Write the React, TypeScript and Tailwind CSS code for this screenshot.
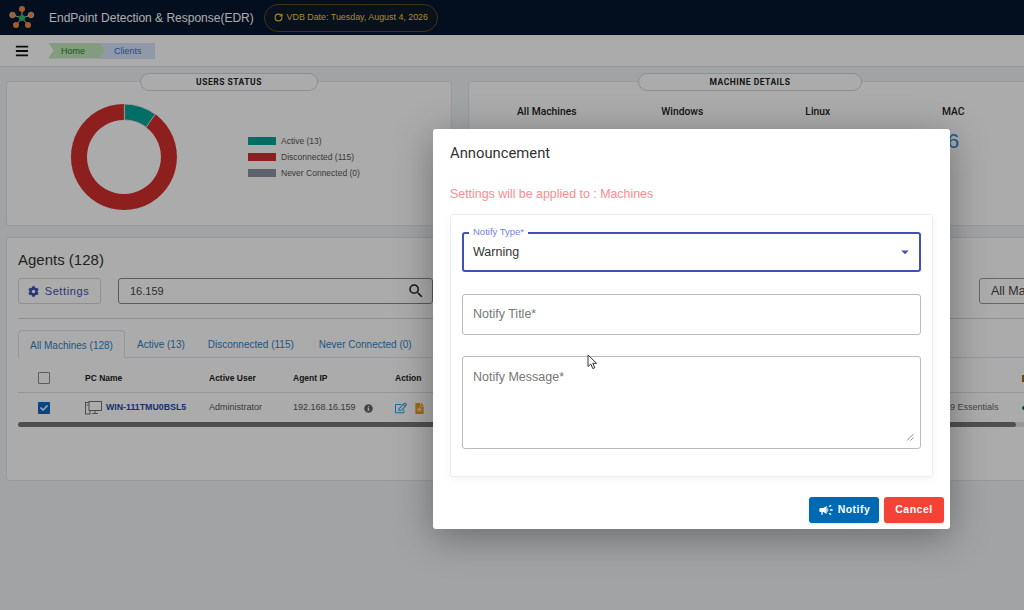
import React from "react";
import { FaCog, FaRegEdit, FaFileAlt, FaInfoCircle, FaBars, FaCheck } from "react-icons/fa";
import { MdSearch, MdArrowDropDown, MdCampaign } from "react-icons/md";
import { RotateCw } from "lucide-react";

const Logo = () => (
  <svg width="30" height="26" viewBox="0 0 30 26" className="shrink-0">
    <g stroke="#cfcfcf" strokeWidth="1">
      <line x1="15" y1="13" x2="15" y2="4" />
      <line x1="15" y1="13" x2="5.5" y2="10" />
      <line x1="15" y1="13" x2="24" y2="10" />
      <line x1="15" y1="13" x2="9" y2="20" />
      <line x1="15" y1="13" x2="21" y2="20" />
    </g>
    <circle cx="15" cy="13" r="3" fill="#22c55e" />
    <circle cx="15" cy="4" r="3" fill="#f08a3c" />
    <circle cx="5.5" cy="10" r="2.8" fill="#f08a3c" stroke="#cfcfcf" strokeWidth="0.8" />
    <circle cx="24" cy="10" r="2.8" fill="#f08a3c" stroke="#cfcfcf" strokeWidth="0.8" />
    <circle cx="9" cy="20" r="3" fill="#f08a3c" />
    <circle cx="21" cy="20" r="3" fill="#f08a3c" />
  </svg>
);

const Donut = () => (
  <svg width="108" height="108" viewBox="0 0 108 108">
    <path d="M54 1 A53 53 0 1 1 53.9 1 L53.9 17 A37 37 0 1 0 54 17 Z" fill="#d32f2f" />
    <path d="M54.6 1 A53 53 0 0 1 85.2 11.2 L76.2 24.2 A37 37 0 0 0 54.6 17 Z" fill="#05a498" stroke="#ffffff" strokeWidth="0.8" />
  </svg>
);

const Machine = () => (
  <svg width="17" height="14" viewBox="0 0 17 14" fill="none" stroke="#666" strokeWidth="0.9">
    <rect x="0.5" y="1.5" width="4.5" height="11.5" />
    <rect x="4" y="0.5" width="12.5" height="9" fill="#fff" />
    <line x1="1.5" y1="4" x2="3.5" y2="4" />
    <line x1="7" y1="12.5" x2="13" y2="12.5" />
    <line x1="10" y1="9.5" x2="10" y2="12.5" />
  </svg>
);

const Cursor = () => (
  <svg width="11" height="16" viewBox="0 0 11 16">
    <path d="M1 1 L1 12.5 L3.8 10 L5.8 14.6 L7.8 13.7 L5.8 9.3 L9.6 9.3 Z" fill="#fff" stroke="#333" strokeWidth="1" strokeLinejoin="round" />
  </svg>
);

const legend = [
  ["bg-[#05a498]", "Active (13)"],
  ["bg-[#d32f2f]", "Disconnected (115)"],
  ["bg-[#8e929e]", "Never Connected (0)"],
];

export default function App() {
  return (
    <div className="relative w-[1024px] h-[610px] overflow-hidden bg-[#f2f3f6] font-['Liberation_Sans',Arial,sans-serif]">
      {/* header */}
      <header className="h-[35px] bg-[#05152f] flex items-center pl-[7px] text-white">
        <Logo />
        <span className="ml-[12px] text-[12px] leading-none whitespace-nowrap">EndPoint Detection &amp; Response(EDR)</span>
        <div className="ml-[10px] h-[28px] w-[174px] rounded-full border border-[#5e5020] bg-[#0e1a2c] flex items-center justify-center gap-[4px] text-[8.9px] whitespace-nowrap text-[#f9c84a]">
          <RotateCw size={9} strokeWidth={3} />
          <span>VDB Date: Tuesday, August 4, 2026</span>
        </div>
      </header>

      {/* breadcrumb bar */}
      <div className="h-[32px] bg-white border-b border-[#dcdfe3] flex items-center pl-[15px]">
        <FaBars className="text-[#111] text-[14px]" />
        <div className="ml-[19px] flex h-[16px] text-[9px] leading-[16px]">
          <div className="w-[57px] pl-[13px] bg-[#c4e8bd] text-[#1b8a1b] relative [clip-path:polygon(0_0,90%_0,100%_50%,90%_100%,0_100%,10%_50%)]">Home</div>
          <div className="w-[55px] -ml-[5px] pl-[14px] bg-[#d9e5fb] text-[#2b6fe0]">Clients</div>
        </div>
      </div>

      {/* status cards */}
      <div className="mt-[14px] pl-[6px] flex gap-[16px]">
        <section className="relative w-[446px] h-[145px] shrink-0 bg-white rounded-[3px] border border-[#e3e5e8] flex items-center pt-[6px]">
          <div className="absolute -top-[9px] left-1/2 -translate-x-1/2 h-[18px] w-[178px] rounded-full border border-[#cfd4da] bg-white flex items-center justify-center font-['Roboto',sans-serif] text-[8.5px] font-bold tracking-[0.5px] text-[#222]">USERS STATUS</div>
          <div className="ml-[63px]"><Donut /></div>
          <div className="ml-[70px] flex flex-col gap-[6px] text-[8.5px] leading-[10px] text-[#555]">
            {legend.map(([c, t]) => (
              <div key={t} className="flex items-center gap-[5px]">
                <span className={`w-[28px] h-[8px] ${c}`} />
                <span>{t}</span>
              </div>
            ))}
          </div>
        </section>
        <section className="relative w-[600px] h-[145px] shrink-0 bg-white rounded-[3px] border border-[#e3e5e8] pl-[10px] pt-[22px]">
          <div className="absolute -top-[9px] left-[169px] h-[18px] w-[224px] rounded-full border border-[#cfd4da] bg-white flex items-center justify-center font-['Roboto',sans-serif] text-[8.5px] font-bold tracking-[0.5px] text-[#222]">MACHINE DETAILS</div>
          <div className="grid grid-cols-[repeat(4,135.5px)] text-center font-['Roboto',sans-serif] font-medium text-[10.3px] text-[#222]">
            <span>All Machines</span>
            <span>Windows</span>
            <span>Linux</span>
            <span>MAC</span>
          </div>
          <div className="grid grid-cols-[repeat(4,135.5px)] text-center text-[21px] leading-[24px] mt-[10px] text-[#2a8ad8]">
            <span />
            <span />
            <span />
            <span>6</span>
          </div>
        </section>
      </div>

      {/* agents */}
      <section className="mt-[11px] ml-[6px] w-[1040px] h-[244px] bg-white rounded-[3px] border border-[#e3e5e8] pl-[11px] pt-[12px]">
        <h2 className="text-[15px] leading-[20px] text-[#333] font-normal">Agents (128)</h2>
        <div className="mt-[8px] flex items-center h-[26px]">
          <button className="w-[83px] h-[26px] shrink-0 rounded-[3px] border border-[#d5d7da] flex items-center justify-center gap-[6px] pr-[2px] text-[11px] tracking-[0.6px] text-[#3f51b5]">
            <FaCog className="text-[11px]" /> Settings
          </button>
          <div className="ml-[17px] w-[315px] h-[26px] shrink-0 rounded-[3px] border border-[#888] flex items-center justify-between pl-[11px] pr-[7px] text-[11px] text-[#444]">
            <span>16.159</span>
            <MdSearch className="text-[18px] text-[#222]" />
          </div>
          <div className="ml-[546px] w-[80px] h-[26px] shrink-0 rounded-[3px] border border-[#999] flex items-center pl-[11px] text-[12.5px] whitespace-nowrap text-[#444]">All Machines</div>
        </div>
        <div className="mt-[14px] h-px bg-[#d5d7da] w-[1028px]" />
        <div className="mt-[11px] flex h-[28px] border-b border-[#dee2e6] w-[1028px] text-[10px] text-[#2f7fc4]">
          <div className="w-[107px] h-[28px] pt-[2px] rounded-t-[4px] border border-[#dee2e6] border-b-white bg-white flex items-center justify-center">All Machines (128)</div>
          <div className="ml-[12px] pt-[2px] flex items-center">Active (13)</div>
          <div className="ml-[23px] pt-[2px] flex items-center">Disconnected (115)</div>
          <div className="ml-[25px] pt-[2px] flex items-center">Never Connected (0)</div>
        </div>
        <div className="relative w-[1028px] h-[35px] pt-[6px] flex items-center border-b border-[#dee2e6] text-[8.5px] font-bold text-[#222]">
          <span className="ml-[20px] w-[12px] h-[12px] border border-[#888] rounded-[1px] shrink-0" />
          <span className="ml-[35px] w-[124px]">PC Name</span>
          <span className="w-[84px]">Active User</span>
          <span className="w-[102px]">Agent IP</span>
          <span className="w-[40px]">Action</span>
          <span className="absolute left-[1004px] top-[17px] w-[3px] h-[7px] bg-[#a8641e]" />
        </div>
        <div className="w-[1028px] h-[30px] flex items-center text-[9px] text-[#555] relative">
          <span className="ml-[20px] w-[12px] h-[12px] bg-[#0a6bc4] rounded-[1px] shrink-0 flex items-center justify-center text-white">
            <FaCheck className="text-[8px]" />
          </span>
          <span className="ml-[35px] w-[124px] flex items-center gap-[4px] text-[8.8px] font-bold text-[#1c4aa8]"><Machine /> WIN-111TMU0BSL5</span>
          <span className="w-[84px]">Administrator</span>
          <span className="w-[102px] flex items-center gap-[8px]">192.168.16.159 <FaInfoCircle className="text-[9px] text-[#666]" /></span>
          <span className="flex items-center gap-[7px]">
            <FaRegEdit className="text-[12px] text-[#2f9fe0]" />
            <FaFileAlt className="text-[11px] text-[#ec9c1e]" />
          </span>
          <span className="absolute left-[932px] text-[#666]">9 Essentials</span>
          <span className="absolute left-[1004px] w-[4px] h-[4px] rounded-full bg-[#0a7a20]" />
        </div>
        <div className="-mt-[1px] w-[1028px] h-[5px] rounded-full bg-[#e2e2e2]">
          <div className="w-[998px] h-[5px] rounded-full bg-[#777]" />
        </div>
      </section>

      {/* backdrop */}
      <div className="absolute inset-0 bg-black/[0.33]" />

      {/* modal */}
      <div role="dialog" className="absolute left-[433px] top-[129px] w-[517px] h-[400px] bg-white rounded-[3px] shadow-[0_8px_38px_rgba(0,0,0,0.35)] flex flex-col">
        <h1 className="mt-[14px] ml-[17px] text-[14.8px] leading-[20px] font-normal text-[#333] font-['Roboto',sans-serif]">Announcement</h1>
        <p className="mt-[22px] ml-[17px] text-[12.4px] leading-[18px] text-[#ff8a90]">Settings will be applied to : Machines</p>
        <div className="mt-[11px] ml-[17px] w-[483px] h-[263px] rounded-[3px] border border-[#eceef0] shadow-[0_2px_8px_rgba(0,0,0,0.05)] px-[11px] pt-[17px] flex flex-col">
          <div className="relative h-[40px] rounded-[3px] border-2 border-[#3f51b5] flex items-center justify-between pl-[9px] pr-[5px] text-[12.5px] text-[#333]">
            <span className="absolute -top-[8px] left-[5px] bg-white px-[4px] text-[9.5px] leading-[11px] text-[#6f86e0]">Notify Type*</span>
            <span>Warning</span>
            <MdArrowDropDown className="text-[18px] text-[#3f51b5]" />
          </div>
          <div className="mt-[22px] h-[41px] rounded-[3px] border border-[#bbb] flex items-center pl-[10px] text-[12.5px] text-[#777]">Notify Title*</div>
          <div className="mt-[21px] relative h-[93px] rounded-[3px] border border-[#bbb] pl-[10px] pt-[12px] text-[12.5px] leading-[16px] text-[#777]">
            Notify Message*
            <svg width="8" height="8" viewBox="0 0 8 8" className="absolute right-[6px] bottom-[7px]" stroke="#777" strokeWidth="0.8">
              <line x1="1" y1="7.5" x2="7.5" y2="1" />
              <line x1="4.5" y1="7.5" x2="7.5" y2="4.5" />
            </svg>
          </div>
        </div>
        <div className="mt-[20px] mr-[6px] flex justify-end gap-[5px] text-[10.5px] font-bold tracking-[0.5px] text-white">
          <button className="w-[70px] h-[26px] rounded-[3px] bg-[#0069b4] shadow-sm flex items-center justify-center gap-[4px]"><MdCampaign className="text-[16px]" /> Notify</button>
          <button className="w-[60px] h-[26px] rounded-[3px] bg-[#f44336] shadow-sm">Cancel</button>
        </div>
      </div>

      {/* pointer */}
      <div className="absolute left-[587px] top-[354px]"><Cursor /></div>
    </div>
  );
}
